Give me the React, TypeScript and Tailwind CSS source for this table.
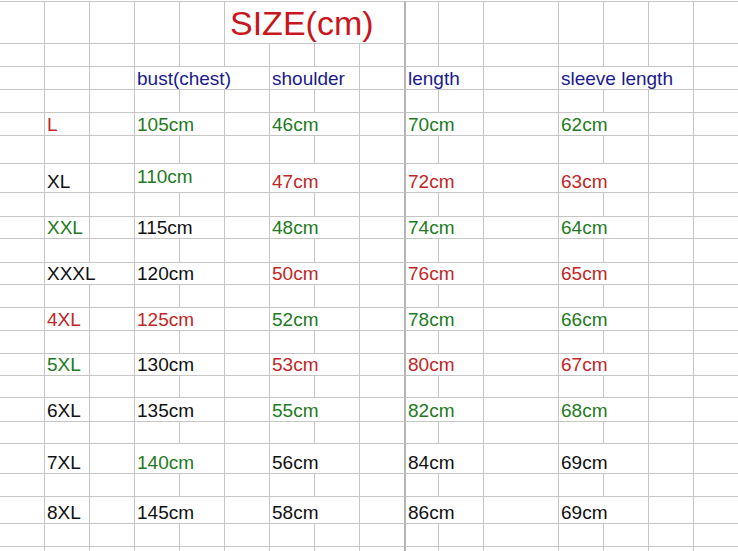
const RED = "text-[#c22626]";
const GREEN = "text-[#237a23]";
const BLACK = "text-[#111111]";
const NAVY = "text-[#1a1a8e]";

type Cell = { span: number; text?: string; color?: string; cls?: string };

const BODY = "pl-[2px] pb-px text-[19px]";

const blank = (n: number): Cell[] => Array.from({ length: n }, () => ({ span: 1 }));

const spacer = (): Cell[] => blank(16);

function sizeRow(
  label: [string, string],
  bust: [string, string],
  shoulder: [string, string],
  length: [string, string],
  sleeve: [string, string],
  opts: { wideLabel?: boolean; bustCls?: string } = {}
): Cell[] {
  return [
    { span: 1 },
    { span: opts.wideLabel ? 2 : 1, text: label[0], color: label[1] },
    ...(opts.wideLabel ? [] : blank(1)),
    { span: 2, text: bust[0], color: bust[1], cls: opts.bustCls },
    { span: 1 },
    { span: 2, text: shoulder[0], color: shoulder[1] },
    { span: 1 },
    { span: 2, text: length[0], color: length[1] },
    { span: 1 },
    { span: 2, text: sleeve[0], color: sleeve[1] },
    { span: 1 },
    { span: 1 },
  ];
}

const rows: Cell[][] = [
  // title
  [
    ...blank(5),
    { span: 4, text: "SIZE(cm)", color: "text-[#c8161d]", cls: "text-[34px] pl-[5px] pb-[3px]" },
    ...blank(7),
  ],
  spacer(),
  // header
  [
    ...blank(3),
    { span: 3, text: "bust(chest)", color: NAVY },
    { span: 2, text: "shoulder", color: NAVY },
    { span: 1 },
    { span: 2, text: "length", color: NAVY },
    { span: 1 },
    { span: 3, text: "sleeve length", color: NAVY },
    { span: 1 },
  ],
  spacer(),
  sizeRow(["L", RED], ["105cm", GREEN], ["46cm", GREEN], ["70cm", GREEN], ["62cm", GREEN]),
  spacer(),
  sizeRow(["XL", BLACK], ["110cm", GREEN], ["47cm", RED], ["72cm", RED], ["63cm", RED], {
    bustCls: "pl-[2px] pb-[6px] text-[19px]",
  }),
  spacer(),
  sizeRow(["XXL", GREEN], ["115cm", BLACK], ["48cm", GREEN], ["74cm", GREEN], ["64cm", GREEN]),
  spacer(),
  sizeRow(["XXXL", BLACK], ["120cm", BLACK], ["50cm", RED], ["76cm", RED], ["65cm", RED], {
    wideLabel: true,
  }),
  spacer(),
  sizeRow(["4XL", RED], ["125cm", RED], ["52cm", GREEN], ["78cm", GREEN], ["66cm", GREEN]),
  spacer(),
  sizeRow(["5XL", GREEN], ["130cm", BLACK], ["53cm", RED], ["80cm", RED], ["67cm", RED]),
  spacer(),
  sizeRow(["6XL", BLACK], ["135cm", BLACK], ["55cm", GREEN], ["82cm", GREEN], ["68cm", GREEN]),
  spacer(),
  sizeRow(["7XL", BLACK], ["140cm", GREEN], ["56cm", BLACK], ["84cm", BLACK], ["69cm", BLACK]),
  spacer(),
  sizeRow(["8XL", BLACK], ["145cm", BLACK], ["58cm", BLACK], ["86cm", BLACK], ["69cm", BLACK]),
  spacer(),
  spacer(),
];

export default function App() {
  return (
    <div
      className="h-[551px] w-[738px] overflow-hidden bg-white pt-px"
      style={{ fontFamily: '"Liberation Sans", Arial, sans-serif' }}
    >
      <div className="grid grid-cols-[44px_45px_45px_45px_45px_45px_45px_45px_45px_34px_45px_75px_45px_45px_45px_45px] grid-rows-[42px_23px_23px_23px_23px_28px_29px_24px_22px_24px_22px_23px_23px_23px_22px_22px_24px_22px_30px_23px_27px_23px_10px]">
        {rows.map((row, r) => {
          let col = 0;
          return row.map((cell, i) => {
            const start = col;
            col += cell.span;
            const span =
              cell.span === 4
                ? "col-span-4"
                : cell.span === 3
                ? "col-span-3"
                : cell.span === 2
                ? "col-span-2"
                : "col-span-1";
            const left =
              start === 0
                ? ""
                : start === 9
                ? "border-l-2 border-l-[#b5b5b5]"
                : "border-l";
            return (
              <div
                key={`${r}-${i}`}
                className={`${span} ${left} flex items-end whitespace-nowrap border-t border-[#c6c6c6] leading-none ${
                  cell.cls ?? BODY
                } ${cell.color ?? ""}`}
              >
                {cell.text}
              </div>
            );
          });
        })}
      </div>
    </div>
  );
}
